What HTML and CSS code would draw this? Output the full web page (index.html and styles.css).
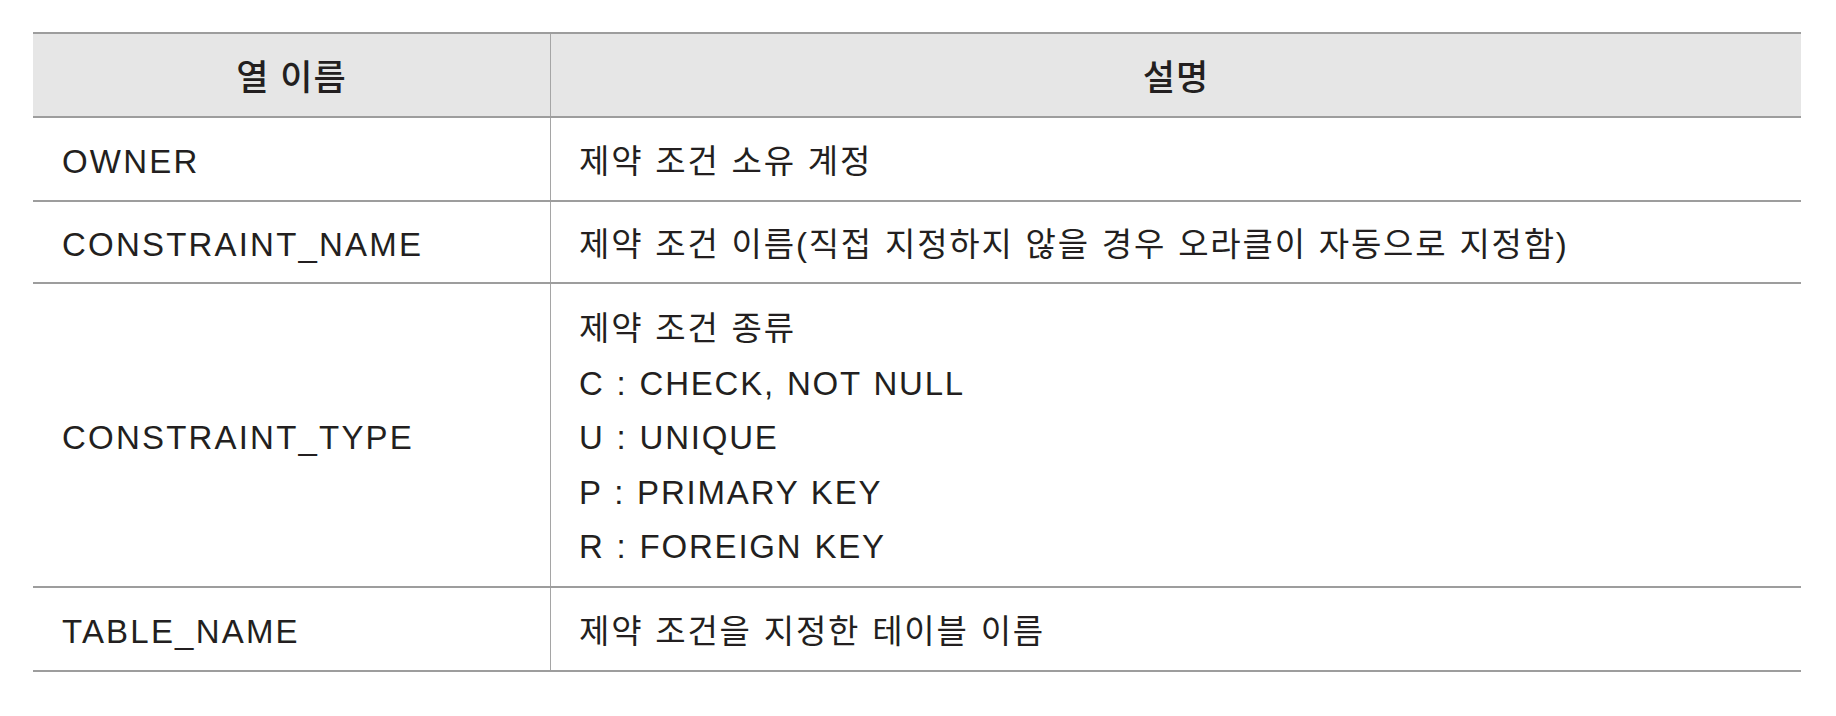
FILE: index.html
```html
<!DOCTYPE html>
<html lang="ko">
<head>
<meta charset="utf-8">
<title>제약 조건 열</title>
<link rel="stylesheet" href="styles.css">
</head>
<body>
<table class="spec">
  <thead>
    <tr class="head-row">
      <th class="col-name">열 이름</th>
      <th class="col-desc">설명</th>
    </tr>
  </thead>
  <tbody>
    <tr class="row">
      <td class="name">OWNER</td>
      <td class="desc">제약 조건 소유 계정</td>
    </tr>
    <tr class="row row-short">
      <td class="name">CONSTRAINT_NAME</td>
      <td class="desc">제약 조건 이름(직접 지정하지 않을 경우 오라클이 자동으로 지정함)</td>
    </tr>
    <tr class="row row-tall">
      <td class="name">CONSTRAINT_TYPE</td>
      <td class="desc multi">
        <div class="line">제약 조건 종류</div>
        <div class="line">C : CHECK, NOT NULL</div>
        <div class="line">U : UNIQUE</div>
        <div class="line">P : PRIMARY KEY</div>
        <div class="line">R : FOREIGN KEY</div>
      </td>
    </tr>
    <tr class="row">
      <td class="name">TABLE_NAME</td>
      <td class="desc">제약 조건을 지정한 테이블 이름</td>
    </tr>
  </tbody>
</table>
</body>
</html>
```

FILE: styles.css
```css
html, body {
  margin: 0;
  padding: 0;
  background: #ffffff;
}

body {
  padding: 32px 35px 0 33px;
  font-family: "Liberation Sans", "Noto Sans CJK KR", sans-serif;
  font-size: 33px;
  color: #231f20;
}

.spec {
  width: 1768px;
  border-collapse: collapse;
  table-layout: fixed;
}

.spec th,
.spec td {
  border-top: 2px solid #9d9d9d;
  border-bottom: 2px solid #9d9d9d;
  padding: 0;
  vertical-align: middle;
  line-height: 1.2;
}

.spec th + th,
.spec td + td {
  border-left: 1px solid #a5a5a5;
}

.col-name {
  width: 517px;
}

.spec .head-row th {
  height: 82px;
  background: #e6e6e6;
  font-family: "Noto Sans CJK KR", sans-serif;
  font-size: 35px;
  font-weight: 500;
  letter-spacing: 1px;
  text-align: center;
}

.spec .row td {
  height: 76px;
  padding-top: 6px;
}

.spec .row-short td {
  height: 74px;
}

.spec .name {
  padding-left: 29px;
  letter-spacing: 2.2px;
}

.spec .desc {
  padding-left: 28px;
  word-spacing: 1px;
  letter-spacing: 1.8px;
}

.spec .row-tall td {
  height: 296px;
}

.spec .row-tall .multi {
  height: 284px;
  padding-top: 18px;
  padding-bottom: 0;
  vertical-align: top;
}

.line {
  height: 54.5px;
  line-height: 54.5px;
}
```
